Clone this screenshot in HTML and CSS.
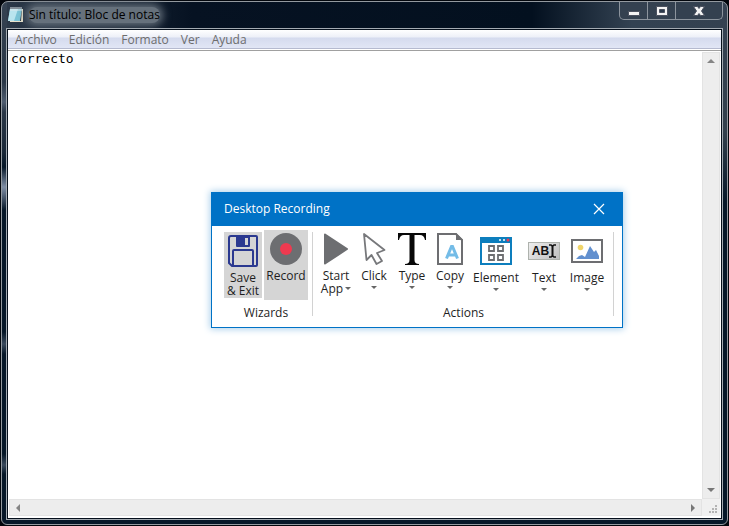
FILE: index.html
```html
<!DOCTYPE html>
<html lang="es">
<head>
<meta charset="utf-8">
<title>Sin título: Bloc de notas</title>
<link rel="stylesheet" href="styles.css">
</head>
<body>
<main class="window">
  <header class="titlebar">
    <svg class="app-icon" width="16" height="16" viewBox="0 0 16 16" aria-hidden="true">
      <path d="M2 2h12l-2 12H0z" fill="#7cc4d6"/>
      <path d="M2 2h8L6 14H0z" fill="#b9e4ee"/>
      <path d="M14 2h1v13H2v-1h11z" fill="#e9e3cd"/>
      <path d="M3 0v4M5 0v4M7 0v4M9 0v4M11 0v4M13 0v4" stroke="#dfe8ec" stroke-width="1"/>
    </svg>
    <h1 class="title">Sin título: Bloc de notas</h1>
    <div class="controls">
      <button class="control" aria-label="Minimizar"><svg width="14" height="12" viewBox="0 0 14 12"><path d="M1.500 6.500h11v4h-11z" fill="#f4f4f4" stroke="#4c5260"/></svg></button>
      <button class="control" aria-label="Maximizar"><svg width="14" height="12" viewBox="0 0 14 12"><path d="M1.500 1.500h11v9h-11z" fill="#f4f4f4" stroke="#4c5260"/><path d="M4.500 4.500h5v3h-5z" fill="#2c3a4b" stroke="#4c5260"/></svg></button>
      <button class="control control-close" aria-label="Cerrar"><svg width="14" height="12" viewBox="0 0 14 12"><path d="M1.500 1.500h4l1.500 2 1.500-2h4L9.500 6l3 4.500h-4L7 8.500l-1.500 2h-4L4.500 6z" fill="#f4f4f4" stroke="#4c5260"/></svg></button>
    </div>
  </header>
  <section class="client">
    <nav class="menubar">
      <button>Archivo</button><button>Edición</button><button>Formato</button><button>Ver</button><button>Ayuda</button>
    </nav>
    <div class="editor">
      <textarea class="text" aria-label="Texto" spellcheck="false">correcto</textarea>
      <div class="scroll scroll-v">
        <button aria-label="Subir"><svg width="8" height="4" viewBox="0 0 8 4"><path d="M0 4l4-4 4 4z" fill="#858585"/></svg></button>
        <button aria-label="Bajar"><svg width="8" height="4" viewBox="0 0 8 4"><path d="M0 0h8L4 4z" fill="#777"/></svg></button>
      </div>
      <div class="scroll scroll-h">
        <button aria-label="Izquierda"><svg width="4" height="8" viewBox="0 0 4 8"><path d="M4 0v8L0 4z" fill="#858585"/></svg></button>
        <button aria-label="Derecha"><svg width="4" height="8" viewBox="0 0 4 8"><path d="M0 0v8l4-4z" fill="#777"/></svg></button>
      </div>
      <div class="grip"><svg width="9" height="9" viewBox="0 0 9 9"><path d="M6 0h2v2H6zM3 3h2v2H3zM6 3h2v2H6zM0 6h2v2H0zM3 6h2v2H3zM6 6h2v2H6z" fill="#b4b4b4"/></svg></div>
    </div>
  </section>
</main>

<section class="recorder" role="dialog" aria-labelledby="recorder-title">
  <header class="recorder-bar">
    <h2 id="recorder-title">Desktop Recording</h2>
    <button class="recorder-close" aria-label="Close"><svg width="12" height="12" viewBox="0 0 12 12"><path d="M1 1l10 10M11 1L1 11" stroke="#fff" stroke-width="1.200"/></svg></button>
  </header>
  <div class="ribbon">
    <div class="group wizards">
      <div class="tools">
        <button class="tool active low save">
          <svg width="32" height="32" viewBox="0 0 32 32" fill="none" stroke="#2b3990" stroke-width="2"><path d="M4 1h25q1 0 1 1v28q0 1-1 1H5l-3-3V3q0-2 2-2z"/><path d="M6 31V16q0-1 1-1h18q1 0 1 1v15"/><path d="M9 1h14v10q0 1-1 1H10q-1 0-1-1z" fill="#2b3990" stroke="none"/><path d="M18 3h3v7h-3z" fill="#d5d5d5" stroke="none"/></svg>
          <span>Save<br>&amp; Exit</span>
        </button>
        <button class="tool active record">
          <svg width="32" height="32" viewBox="0 0 32 32"><circle cx="16" cy="16" r="16" fill="#6d6e71"/><circle cx="16" cy="16" r="6" fill="#ef3a50"/></svg>
          <span>Record</span>
        </button>
      </div>
      <p class="caption">Wizards</p>
    </div>
    <div class="group actions">
      <div class="tools">
        <button class="tool">
          <svg width="32" height="32" viewBox="0 0 32 32"><path d="M5 1.500L27 16 5 30.500z" fill="#6d6e71" stroke="#6d6e71" stroke-width="2" stroke-linejoin="round"/></svg>
          <span>Start<br>App<i class="arrow inline"></i></span>
        </button>
        <button class="tool">
          <svg width="32" height="32" viewBox="0 0 32 32"><path d="M6 1L8.500 27l5-5 5 9 5.500-3-5-8 7.500-3z" fill="#fff" stroke="#77787b" stroke-width="1.800" stroke-linejoin="round"/></svg>
          <span>Click</span><i class="arrow"></i>
        </button>
        <button class="tool">
          <svg width="32" height="32" viewBox="0 0 32 32"><path d="M2 0h28v7h-1q-1-5-5-5h-5.500v25q0 4 4.500 4v1H9v-1q4.500 0 4.500-4V2H8Q4 2 3 7H2z" fill="#080808"/></svg>
          <span>Type</span><i class="arrow"></i>
        </button>
        <button class="tool">
          <svg width="32" height="32" viewBox="0 0 32 32"><path d="M4 1h18l6 6v24H4z" fill="#fff" stroke="#6d6e71" stroke-width="2"/><path d="M22 0l7 7h-7z" fill="#6d6e71"/><path d="M12.500 25.500l5-12h1l5 12M14.500 22h7" fill="none" stroke="#74bce7" stroke-width="3"/></svg>
          <span>Copy</span><i class="arrow"></i>
        </button>
        <button class="tool low">
          <svg width="32" height="32" viewBox="0 0 32 32"><path d="M0 2h32v28H0z" fill="#0d7ebd"/><path d="M2 8h28v20H2z" fill="#fff"/><path d="M9 11h5v5H9zM18 11h5v5h-5zM9 20h5v5H9zM18 20h5v5h-5z" fill="#fff" stroke="#6d6e71" stroke-width="1.800"/><circle cx="20" cy="5" r="1" fill="#fff"/><circle cx="24" cy="5" r="1" fill="#fff"/><circle cx="28" cy="5" r="1.500" fill="#ef3a50"/></svg>
          <span>Element</span><i class="arrow"></i>
        </button>
        <button class="tool low">
          <span class="field-icon"><b>AB</b><svg width="7" height="14" viewBox="0 0 7 14" fill="none" stroke="#111"><path d="M0 1h2l1.500 1L5 1h2M0 13h2l1.500-1L5 13h2" stroke-width="1.500"/><path d="M3.500 2v10" stroke-width="2"/></svg></span>
          <span>Text</span><i class="arrow"></i>
        </button>
        <button class="tool low">
          <svg width="32" height="32" viewBox="0 0 32 32"><path d="M1 5h30v22H1z" fill="#fff" stroke="#6d6e71" stroke-width="2"/><circle cx="9.500" cy="12.500" r="2.800" fill="#f0d56c"/><path d="M5 24l3-3 3-1 3 2 5-11 4 6 2-2 3 6v3z" fill="#6290cf"/></svg>
          <span>Image</span><i class="arrow"></i>
        </button>
      </div>
      <p class="caption">Actions</p>
    </div>
  </div>
</section>
</body>
</html>
```
FILE: styles.css
```css
* { box-sizing: border-box; }

body {
  margin: 0;
  min-height: 100vh;
  padding: 1px;
  display: flex;
  background: #02060c;
  font: 12px/16px "Open Sans", "Noto Sans", sans-serif;
}

button {
  margin: 0;
  padding: 0;
  border: 0;
  background: none;
  color: inherit;
  font: inherit;
}

svg { display: block; }
h1, h2, p { margin: 0; font-size: 12px; font-weight: 400; }

.window {
  flex: 1;
  display: flex;
  flex-direction: column;
  padding: 0 4px 4px;
  border: 1px solid #93999f;
  border-radius: 7px 7px 6px 6px;
  background:
    linear-gradient(#354252, #2a3747 80px, #4f5d70 100px, #2a3747 110px, #1a2838 150px, #061728 165px, #7f8ea5 185px, #061728 208px, #061728 330px, #3a4a5d 342px, #061728 352px, #061728 452px, #3a4a5d 463px, #061728 472px) left / 5px 100% no-repeat,
    linear-gradient(#354252, #33404d 130px, #061728 200px) right / 5px 100% no-repeat,
    linear-gradient(90deg, #2c3949, #061222 190px, #03101f 530px, #334252 630px, #344150) top / 100% 28px no-repeat,
    #061728;
}

.titlebar {
  display: flex;
  align-items: flex-start;
  height: 26px;
  padding-left: 2px;
}

.app-icon { margin: 5px 5px 0 0; }

.title {
  margin-top: 5px;
  color: #000;
  line-height: 16px;
  background: #66717c;
  border-radius: 8px;
  box-shadow: 0 0 8px 3px #66717c;
}

.controls {
  display: flex;
  margin-left: auto;
  height: 18px;
  border: 1px solid #8c949d;
  border-top: 0;
  border-radius: 0 0 5px 5px;
  background: #344150;
}

.control {
  display: grid;
  place-items: center;
  width: 28px;
  border-right: 1px solid #8c949d;
}

.control-close { width: 46px; border: 0; }

.client {
  flex: 1;
  display: flex;
  flex-direction: column;
  border: 1px solid #a4abb2;
  outline: 1px solid #06101c;
  outline-offset: -2px;
  padding: 1px;
  background: #fff;
}

.menubar {
  display: flex;
  height: 19px;
  gap: 12px;
  padding: 1px 7px 0;
  color: #6d6d6d;
  border-bottom: 1px solid #b5bacf;
  background: linear-gradient(#fff, #edf0f8 7px, #d5dbee 8px, #e1e6f5);
}

.editor {
  flex: 1;
  display: grid;
  grid-template: 1fr 17px / 1fr 18px;
  margin-top: 1px;
  padding: 1px 1px 2px;
  border-top: 1px solid #a0a0a0;
}

.text {
  width: 100%;
  height: 100%;
  padding: 0 2px;
  border: 0;
  outline: 0;
  resize: none;
  overflow: hidden;
  color: #000;
  background: #fff;
  font: 13px/14px "DejaVu Sans Mono", monospace;
}

.scroll {
  display: flex;
  justify-content: space-between;
  align-items: center;
  background: #ededed;
  border: 1px solid #e3e3e3;
}

.scroll-v { flex-direction: column; padding: 6px 0; }
.scroll-h { padding: 0 6px; }

.grip {
  display: flex;
  align-items: flex-end;
  justify-content: flex-end;
  padding: 2px;
  background: #f0f0f0;
}

.recorder {
  position: absolute;
  left: 211px;
  top: 192px;
  width: 412px;
  border: 1px solid #0072c6;
  background: #fff;
  color: #1e1e1e;
  box-shadow: 0 0 7px 1px #a9cfea;
}

.recorder-bar {
  display: flex;
  align-items: center;
  justify-content: space-between;
  height: 33px;
  padding: 0 17px 2px 12px;
  color: #fff;
  background: #0072c6;
}

.ribbon { display: flex; padding: 4px 8px 8px; }

.group {
  display: flex;
  flex-direction: column;
  justify-content: space-between;
  position: relative;
  height: 89px;
}

.group::after {
  content: "";
  position: absolute;
  right: 0;
  top: 2px;
  bottom: 3px;
  width: 1px;
  background: #d2d2d2;
}

.wizards { width: 93px; padding-left: 4px; padding-right: 5px; }
.actions { width: 301px; padding-left: 4px; padding-right: 4px; }

.tools { display: flex; align-items: flex-start; }
.wizards .tools { gap: 2px; }

.tool {
  display: flex;
  flex-direction: column;
  align-items: center;
  width: 38px;
  padding-top: 3px;
  line-height: 13px;
  white-space: nowrap;
}

.tool > span:not(.field-icon) { margin-top: 4px; }
.tool.low { margin-top: 2px; }
.tool.active { background: #d5d5d5; }
.save { height: 66px; }
.record { width: 44px; height: 70px; }
.actions .tool:nth-child(5) { width: 54px; }
.actions .tool:nth-child(6) { width: 42px; }
.actions .tool:nth-child(7) { width: 44px; }

.field-icon {
  display: flex;
  align-items: center;
  justify-content: center;
  width: 32px;
  height: 18px;
  margin: 7px 0;
  border: 1px solid #aeb2ad;
  background: linear-gradient(135deg, #eee, #bfbfbf);
  color: #111;
  font: bold 12px/14px "Liberation Sans", sans-serif;
}

.arrow {
  width: 0;
  margin-top: 4px;
  border: 3px solid transparent;
  border-top-color: #666;
  border-bottom: 0;
}

.arrow.inline {
  display: inline-block;
  margin: 0 0 3px 2px;
}

.caption { text-align: center; line-height: 13px; }
```
